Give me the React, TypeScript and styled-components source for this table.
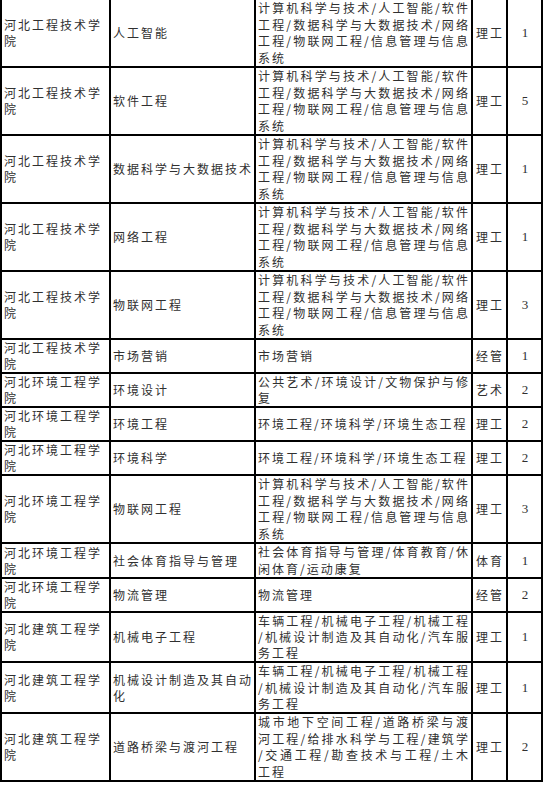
import React from "react";
import styled, { createGlobalStyle } from "styled-components";

const GlobalStyle = createGlobalStyle`
  html, body {
    margin: 0;
    padding: 0;
    background: #ffffff;
  }
  body {
    font-family: "Noto Sans CJK SC", "Liberation Serif", serif;
  }
`;

interface Row {
  school: string;
  major: string;
  req: string[];
  kind: string;
  count: string;
}

const csReq = [
  "计算机科学与技术/人工智能/软件",
  "工程/数据科学与大数据技术/网络",
  "工程/物联网工程/信息管理与信息",
  "系统",
];

const envReq = ["环境工程/环境科学/环境生态工程"];

const mechReq = [
  "车辆工程/机械电子工程/机械工程",
  "/机械设计制造及其自动化/汽车服",
  "务工程",
];

const rows: Row[] = [
  { school: "河北工程技术学院", major: "人工智能", req: csReq, kind: "理工", count: "1" },
  { school: "河北工程技术学院", major: "软件工程", req: csReq, kind: "理工", count: "5" },
  { school: "河北工程技术学院", major: "数据科学与大数据技术", req: csReq, kind: "理工", count: "1" },
  { school: "河北工程技术学院", major: "网络工程", req: csReq, kind: "理工", count: "1" },
  { school: "河北工程技术学院", major: "物联网工程", req: csReq, kind: "理工", count: "3" },
  { school: "河北工程技术学院", major: "市场营销", req: ["市场营销"], kind: "经管", count: "1" },
  {
    school: "河北环境工程学院",
    major: "环境设计",
    req: ["公共艺术/环境设计/文物保护与修", "复"],
    kind: "艺术",
    count: "2",
  },
  { school: "河北环境工程学院", major: "环境工程", req: envReq, kind: "理工", count: "2" },
  { school: "河北环境工程学院", major: "环境科学", req: envReq, kind: "理工", count: "2" },
  { school: "河北环境工程学院", major: "物联网工程", req: csReq, kind: "理工", count: "3" },
  {
    school: "河北环境工程学院",
    major: "社会体育指导与管理",
    req: ["社会体育指导与管理/体育教育/休", "闲体育/运动康复"],
    kind: "体育",
    count: "1",
  },
  { school: "河北环境工程学院", major: "物流管理", req: ["物流管理"], kind: "经管", count: "2" },
  { school: "河北建筑工程学院", major: "机械电子工程", req: mechReq, kind: "理工", count: "1" },
  { school: "河北建筑工程学院", major: "机械设计制造及其自动化", req: mechReq, kind: "理工", count: "1" },
  {
    school: "河北建筑工程学院",
    major: "道路桥梁与渡河工程",
    req: [
      "城市地下空间工程/道路桥梁与渡",
      "河工程/给排水科学与工程/建筑学",
      "/交通工程/勘查技术与工程/土木",
      "工程",
    ],
    kind: "理工",
    count: "2",
  },
];

const Sheet = styled.table`
  border-collapse: collapse;
  table-layout: fixed;
  width: 543px;
  margin: 0;
  color: #303030;
  font-size: 12px;
  line-height: 16px;
  letter-spacing: 2px;

  tr:first-child td {
    border-top: none;
  }
`;

const Col = styled.col<{ $w: number }>`
  width: ${(p) => p.$w}px;
`;

const Cell = styled.td<{ $center?: boolean; $serif?: boolean }>`
  border: 2px solid #000;
  padding: 0 1px 0 2px;
  vertical-align: middle;
  text-align: ${(p) => (p.$center ? "center" : "left")};
  font-family: ${(p) =>
    p.$serif ? '"Liberation Serif", serif' : '"Noto Sans CJK SC", sans-serif'};
  font-size: ${(p) => (p.$serif ? "13px" : "12px")};
  letter-spacing: ${(p) => (p.$serif ? "0" : "2px")};
  word-break: break-all;
`;

// the source's row heights grow a little per line once a cell holds 4 lines
const ReqBlock = styled.div<{ $lines: number }>`
  line-height: ${(p) => (p.$lines >= 4 ? 16.5 : 16.2)}px;
`;

const ReqLine = styled.div<{ $fill: boolean }>`
  white-space: nowrap;
  text-align: justify;
  text-align-last: ${(p) => (p.$fill ? "justify" : "left")};
`;

export default function App() {
  return (
    <>
      <GlobalStyle />
      <Sheet>
        <colgroup>
          <Col $w={109} />
          <Col $w={145} />
          <Col $w={217} />
          <Col $w={35} />
          <Col $w={35} />
        </colgroup>
        <tbody>
          {rows.map((r, i) => (
            <tr key={i}>
              <Cell>{r.school}</Cell>
              <Cell>{r.major}</Cell>
              <Cell>
                <ReqBlock $lines={r.req.length}>
                  {r.req.map((line, j) => (
                    <ReqLine key={j} $fill={j < r.req.length - 1}>
                      {line}
                    </ReqLine>
                  ))}
                </ReqBlock>
              </Cell>
              <Cell $center>{r.kind}</Cell>
              <Cell $center $serif>
                {r.count}
              </Cell>
            </tr>
          ))}
        </tbody>
      </Sheet>
    </>
  );
}
